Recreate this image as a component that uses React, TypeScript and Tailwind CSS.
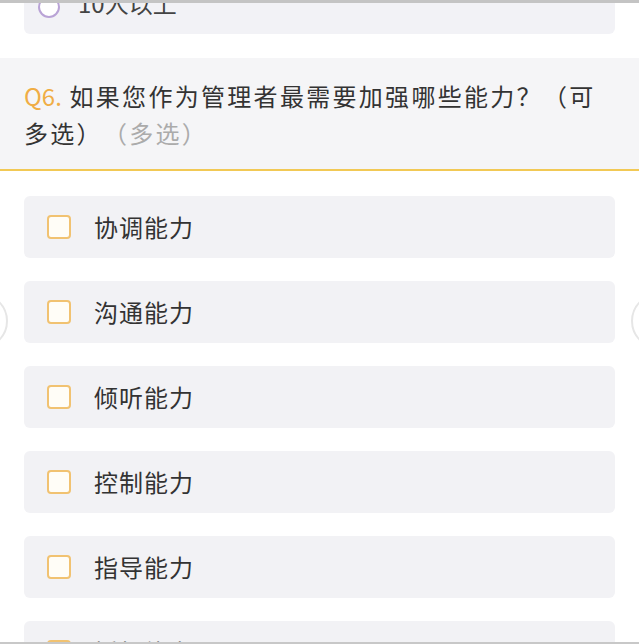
import React from 'react'

const options = ['协调能力', '沟通能力', '倾听能力', '控制能力', '指导能力', '授权能力']

const Checkbox = () => (
  <span className="w-[24px] h-[24px] shrink-0 rounded-[4px] border-2 border-[#f1c271] bg-[#fffdf7]" />
)

const App = () => {
  return (
    <div
      className="relative w-[639px] h-[644px] overflow-hidden bg-white text-[#333]"
      style={{ fontFamily: '"Noto Sans CJK SC", "Noto Sans", sans-serif' }}
    >
      <div className="absolute top-0 left-0 right-0 h-[3px] bg-[#c4c4c4] z-10" />
      <div className="absolute bottom-0 left-0 right-0 h-[2px] bg-[#c8c8c8] z-10" />

      {/* previous question last option */}
      <div className="mx-[24px] mt-[-28px] h-[62px] rounded-[6px] bg-[#f2f2f6] flex items-center gap-[18px] px-[14px]">
        <span className="w-[22px] h-[22px] mt-[8px] rounded-full border-2 border-[#b9a3d6] bg-white" />
        <span className="text-[24px] text-[#444]">10人以上</span>
      </div>

      {/* question header */}
      <div className="mt-[24px] bg-[#f5f5f7] border-b-2 border-[#f2c955] px-[24px] pt-[19px] pb-[18px]">
        <p className="text-[24px] leading-[37px] tracking-[2.3px]">
          <span className="text-[#f0ad45] tracking-[0px]">Q6.</span> 如果您作为管理者最需要加强哪些能力？（可多选）
          <span className="text-[#ababab] ml-[12px]">（多选）</span>
        </p>
      </div>

      {/* options */}
      <div className="mt-[25px] mx-[24px] flex flex-col gap-[23px]">
        {options.map((o) => (
          <div key={o} className="h-[62px] rounded-[6px] bg-[#f2f2f5] flex items-center gap-[23px] px-[23px]">
            <Checkbox />
            <span className="text-[24px] tracking-[1px]">{o}</span>
          </div>
        ))}
      </div>

      {/* side swipe circles */}
      <div className="absolute left-[-48px] top-[293px] w-[56px] h-[56px] rounded-full border-2 border-[#e6e6e6] bg-white" />
      <div className="absolute right-[-48px] top-[293px] w-[56px] h-[56px] rounded-full border-2 border-[#e6e6e6] bg-white" />
    </div>
  )
}

export default App
